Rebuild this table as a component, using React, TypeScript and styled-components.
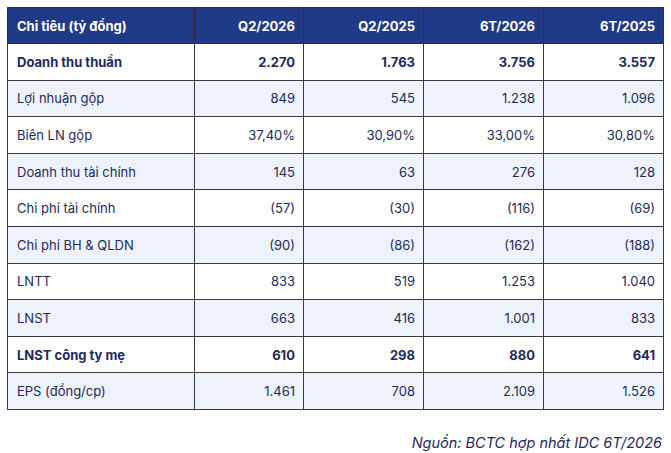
import styled, { createGlobalStyle } from "styled-components";

const GlobalStyle = createGlobalStyle`
  html, body {
    margin: 0;
    padding: 0;
    background: #ffffff;
  }
  body {
    font-family: Inter, "Noto Sans", "Liberation Sans", sans-serif;
  }
`;

const Page = styled.div`
  width: 671px;
  height: 453px;
  padding: 7px 7px 0 7px;
  box-sizing: border-box;
  background: #ffffff;
`;

const Table = styled.table`
  width: 656px;
  border-collapse: collapse;
  table-layout: fixed;
  font-size: 13px;
  color: #1d2a5c;
`;

const Col = styled.col<{ $w: number }>`
  width: ${(p) => p.$w}px;
`;

const HeadCell = styled.th<{ $left?: boolean }>`
  height: 36px;
  box-sizing: border-box;
  background: #1f3a86;
  color: #ffffff;
  font-weight: 700;
  text-align: ${(p) => (p.$left ? "left" : "right")};
  padding: 0 8px 0 9px;
  border: 1px solid #2f2f33;
`;

const Row = styled.tr<{ $shaded: boolean }>`
  height: 36.6px;
  background: ${(p) => (p.$shaded ? "#eef2fb" : "#ffffff")};
`;

const Cell = styled.td<{ $left?: boolean; $bold?: boolean }>`
  box-sizing: border-box;
  padding: 0 8px 0 9px;
  text-align: ${(p) => (p.$left ? "left" : "right")};
  font-weight: ${(p) => (p.$bold ? 700 : 400)};
  border: 1px solid #3a3a3e;
  white-space: nowrap;
`;

const Source = styled.div`
  margin-top: 24px;
  padding-right: 2px;
  text-align: right;
  font-size: 14.5px;
  font-style: italic;
  color: #1d2a5c;
`;

type Line = { label: string; values: string[]; bold?: boolean };

const columns = ["Q2/2026", "Q2/2025", "6T/2026", "6T/2025"];
const widths = [187, 109, 120, 120, 120];

const lines: Line[] = [
  { label: "Doanh thu thuần", values: ["2.270", "1.763", "3.756", "3.557"], bold: true },
  { label: "Lợi nhuận gộp", values: ["849", "545", "1.238", "1.096"] },
  { label: "Biên LN gộp", values: ["37,40%", "30,90%", "33,00%", "30,80%"] },
  { label: "Doanh thu tài chính", values: ["145", "63", "276", "128"] },
  { label: "Chi phí tài chính", values: ["(57)", "(30)", "(116)", "(69)"] },
  { label: "Chi phí BH & QLDN", values: ["(90)", "(86)", "(162)", "(188)"] },
  { label: "LNTT", values: ["833", "519", "1.253", "1.040"] },
  { label: "LNST", values: ["663", "416", "1.001", "833"] },
  { label: "LNST công ty mẹ", values: ["610", "298", "880", "641"], bold: true },
  { label: "EPS (đồng/cp)", values: ["1.461", "708", "2.109", "1.526"] },
];

export default function App() {
  return (
    <Page>
      <GlobalStyle />
      <Table>
        <colgroup>
          {widths.map((w, i) => (
            <Col key={i} $w={w} />
          ))}
        </colgroup>
        <thead>
          <tr>
            <HeadCell $left>Chỉ tiêu (tỷ đồng)</HeadCell>
            {columns.map((c) => (
              <HeadCell key={c}>{c}</HeadCell>
            ))}
          </tr>
        </thead>
        <tbody>
          {lines.map((line, index) => (
            <Row key={line.label} $shaded={index % 2 === 1}>
              <Cell $left $bold={line.bold}>
                {line.label}
              </Cell>
              {line.values.map((v, i) => (
                <Cell key={i} $bold={line.bold}>
                  {v}
                </Cell>
              ))}
            </Row>
          ))}
        </tbody>
      </Table>
      <Source>Nguồn: BCTC hợp nhất IDC 6T/2026</Source>
    </Page>
  );
}
